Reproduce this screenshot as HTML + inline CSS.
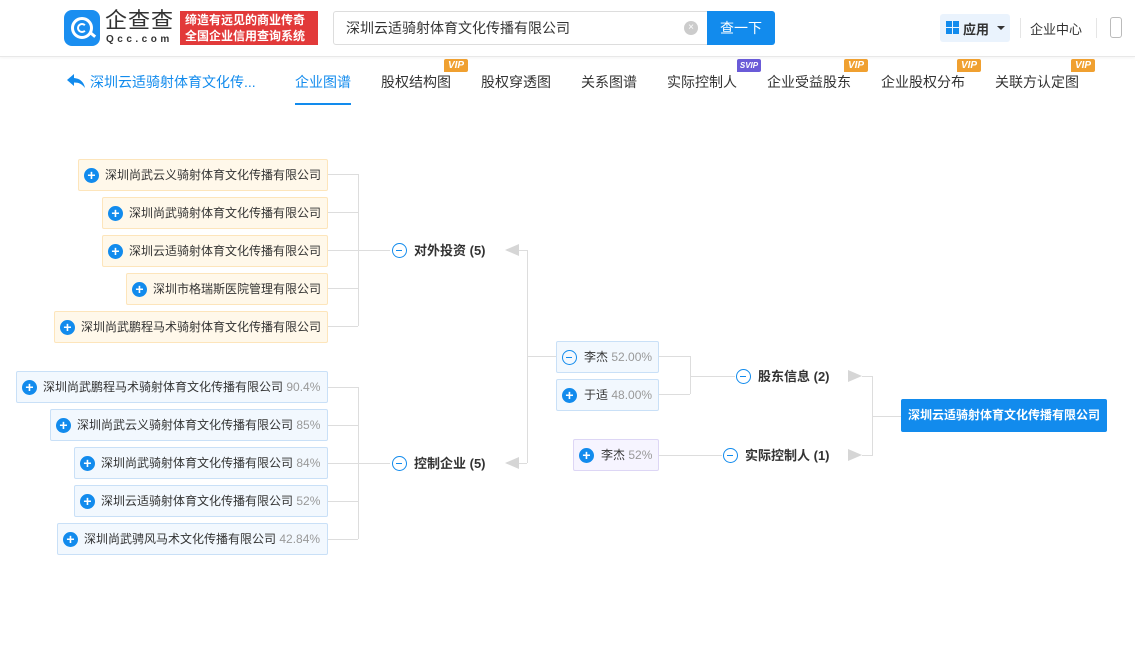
<!DOCTYPE html>
<html><head><meta charset="utf-8"><style>
*{margin:0;padding:0;box-sizing:border-box}
body{width:1135px;height:665px;background:#fff;position:relative;overflow:hidden;font-family:"Liberation Sans","Noto Sans CJK SC",sans-serif;color:#333}
.a{position:absolute}
.hdr{left:0;top:0;width:1135px;height:57px;border-bottom:1px solid #e8e8e8;box-shadow:0 1px 3px rgba(0,0,0,.05)}
.box{position:absolute;height:32px;border-radius:2px;font-size:12px;line-height:30px;padding-left:26px;white-space:nowrap;color:#333}
.o{background:#fff8ea;border:1px solid #fde5bb}
.b{background:#f2f8fe;border:1px solid #c9e0f7}
.p{background:#f6f4ff;border:1px solid #ddd6f5}
.pl{position:absolute;left:5px;top:8px;width:15px;height:15px;border-radius:50%;background:#128bed;color:#fff;font-size:14px;line-height:14px;text-align:center;font-weight:bold}
.mi{position:absolute;left:5px;top:8px;width:15px;height:15px;border-radius:50%;border:1.5px solid #128bed}
.mi:after,.lc:after{content:"";position:absolute;left:3px;top:5.5px;width:6px;height:1.5px;background:#128bed}
.g{color:#999}
.h{position:absolute;height:1px;background:#ddd}
.v{position:absolute;width:1px;background:#ddd}
.lab{position:absolute;font-size:13px;font-weight:bold;color:#333;line-height:16px;padding-left:22px;white-space:nowrap}
.lc{position:absolute;left:0;top:0;width:15px;height:15px;border-radius:50%;border:1.5px solid #128bed}
.tri{position:absolute;width:0;height:0;border-top:6px solid transparent;border-bottom:6px solid transparent}
.tl{border-right:14px solid #d6d6d6}
.tr{border-left:14px solid #d6d6d6}
.nav{position:absolute;top:72px;font-size:14px;color:#333;white-space:nowrap}
.vip{position:absolute;top:59px;width:24px;height:13px;background:#f0a030;color:#fff;font-size:10px;font-weight:bold;font-style:italic;line-height:13px;text-align:center;border-radius:2px 2px 2px 0}
</style></head><body>
<div class="a hdr"></div>
<!-- logo -->
<div class="a" style="left:64px;top:10px;width:36px;height:36px;border-radius:8px;background:#1a8ef0"></div>
<div class="a" style="left:71px;top:17px;width:22px;height:22px;border-radius:50%;border:3px solid #fff"></div>
<div class="a" style="left:77px;top:23px;width:10px;height:10px;border-radius:50%;border:2.5px solid #fff;border-right-color:transparent"></div>
<div class="a" style="left:89px;top:33px;width:7px;height:3px;background:#fff;transform:rotate(40deg)"></div>
<div class="a" style="left:105px;top:8px;font-size:22px;color:#333;line-height:26px;letter-spacing:1px">企查查</div>
<div class="a" style="left:106px;top:34px;font-size:10px;color:#333;letter-spacing:3.5px;font-weight:bold">Qcc.com</div>
<div class="a" style="left:180px;top:11px;width:138px;height:34px;background:#e23a3a;color:#fff;font-size:12px;line-height:16px;padding:1px 0 0 5px;font-weight:bold;white-space:nowrap">缔造有远见的商业传奇<br>全国企业信用查询系统</div>
<!-- search -->
<div class="a" style="left:333px;top:11px;width:376px;height:34px;border:1px solid #ddd;border-radius:3px 0 0 3px;font-size:14px;line-height:32px;padding-left:12px;color:#333">深圳云适骑射体育文化传播有限公司</div>
<div class="a" style="left:684px;top:21px;width:14px;height:14px;border-radius:50%;background:#ccc;color:#fff;font-size:10px;line-height:14px;text-align:center">×</div>
<div class="a" style="left:707px;top:11px;width:68px;height:34px;background:#128bed;border-radius:0 3px 3px 0;color:#fff;font-size:14px;line-height:34px;text-align:center">查一下</div>
<div class="a" style="left:940px;top:14px;width:70px;height:28px;background:#eaf3fd;border-radius:3px"></div>
<div class="a" style="left:946px;top:21px;width:6px;height:6px;background:#128bed"></div>
<div class="a" style="left:953px;top:21px;width:6px;height:6px;background:#128bed"></div>
<div class="a" style="left:946px;top:28px;width:6px;height:6px;background:#128bed"></div>
<div class="a" style="left:953px;top:28px;width:6px;height:6px;background:#128bed"></div>
<div class="a" style="left:963px;top:19px;font-size:13px;font-weight:bold;color:#333">应用</div>
<div class="tri a" style="left:997px;top:26px;border:4px solid transparent;border-top:4px solid #333;border-bottom:0"></div>
<div class="a" style="left:1020px;top:18px;width:1px;height:20px;background:#e5e5e5"></div>
<div class="a" style="left:1030px;top:19px;font-size:13px;color:#333">企业中心</div>
<div class="a" style="left:1096px;top:18px;width:1px;height:20px;background:#e5e5e5"></div>
<div class="a" style="left:1110px;top:17px;width:12px;height:21px;border:1.5px solid #bbb;border-radius:3px"></div>
<!-- nav -->
<svg class="a" style="left:66px;top:73px" width="20" height="16" viewBox="0 0 20 16"><path d="M8 1 L1 7 L8 13 L8 9.5 C13 9.5 16 11 19 15 C18 9 14 5.5 8 5 Z" fill="#128bed"/></svg>
<div class="nav" style="left:90px;color:#128bed">深圳云适骑射体育文化传...</div>
<div class="nav" style="left:295px;color:#128bed">企业图谱</div>
<div class="a" style="left:295px;top:103px;width:56px;height:2px;background:#128bed"></div>
<div class="nav" style="left:381px">股权结构图</div><div class="vip" style="left:444px">VIP</div>
<div class="nav" style="left:481px">股权穿透图</div>
<div class="nav" style="left:581px">关系图谱</div>
<div class="nav" style="left:667px">实际控制人</div><div class="vip" style="left:737px;background:#6a5bd8;font-size:8px">SVIP</div>
<div class="nav" style="left:767px">企业受益股东</div><div class="vip" style="left:844px">VIP</div>
<div class="nav" style="left:881px">企业股权分布</div><div class="vip" style="left:957px">VIP</div>
<div class="nav" style="left:995px">关联方认定图</div><div class="vip" style="left:1071px">VIP</div>

<!-- top group -->
<div class="box o" style="left:78px;top:159px;width:250px"><span class="pl">+</span>深圳尚武云义骑射体育文化传播有限公司</div>
<div class="box o" style="left:102px;top:197px;width:226px"><span class="pl">+</span>深圳尚武骑射体育文化传播有限公司</div>
<div class="box o" style="left:102px;top:235px;width:226px"><span class="pl">+</span>深圳云适骑射体育文化传播有限公司</div>
<div class="box o" style="left:126px;top:273px;width:202px"><span class="pl">+</span>深圳市格瑞斯医院管理有限公司</div>
<div class="box o" style="left:54px;top:311px;width:274px"><span class="pl">+</span>深圳尚武鹏程马术骑射体育文化传播有限公司</div>
<div class="h" style="left:328px;top:174px;width:30px"></div>
<div class="h" style="left:328px;top:212px;width:30px"></div>
<div class="h" style="left:328px;top:250px;width:62px"></div>
<div class="h" style="left:328px;top:288px;width:30px"></div>
<div class="h" style="left:328px;top:326px;width:30px"></div>
<div class="v" style="left:358px;top:174px;height:152px"></div>
<div class="lab" style="left:392px;top:243px"><span class="lc"></span>对外投资 (5)</div>
<div class="tri tl" style="left:505px;top:244px"></div>
<div class="h" style="left:519px;top:250px;width:8px"></div>

<!-- bottom group -->
<div class="box b" style="left:16px;top:371px;width:312px"><span class="pl">+</span>深圳尚武鹏程马术骑射体育文化传播有限公司 <span class="g">90.4%</span></div>
<div class="box b" style="left:50px;top:409px;width:278px"><span class="pl">+</span>深圳尚武云义骑射体育文化传播有限公司 <span class="g">85%</span></div>
<div class="box b" style="left:74px;top:447px;width:254px"><span class="pl">+</span>深圳尚武骑射体育文化传播有限公司 <span class="g">84%</span></div>
<div class="box b" style="left:74px;top:485px;width:254px"><span class="pl">+</span>深圳云适骑射体育文化传播有限公司 <span class="g">52%</span></div>
<div class="box b" style="left:57px;top:523px;width:271px"><span class="pl">+</span>深圳尚武骋风马术文化传播有限公司 <span class="g">42.84%</span></div>
<div class="h" style="left:328px;top:387px;width:30px"></div>
<div class="h" style="left:328px;top:425px;width:30px"></div>
<div class="h" style="left:328px;top:463px;width:62px"></div>
<div class="h" style="left:328px;top:501px;width:30px"></div>
<div class="h" style="left:328px;top:539px;width:30px"></div>
<div class="v" style="left:358px;top:387px;height:152px"></div>
<div class="lab" style="left:392px;top:456px"><span class="lc"></span>控制企业 (5)</div>
<div class="tri tl" style="left:505px;top:457px"></div>
<div class="h" style="left:519px;top:463px;width:8px"></div>
<div class="v" style="left:527px;top:250px;height:213px"></div>
<div class="h" style="left:527px;top:356px;width:29px"></div>

<!-- shareholders -->
<div class="box b" style="left:556px;top:341px;width:103px;padding-left:27px"><span class="mi"></span>李杰 <span class="g">52.00%</span></div>
<div class="box b" style="left:556px;top:379px;width:103px;padding-left:27px"><span class="pl">+</span>于适 <span class="g">48.00%</span></div>
<div class="h" style="left:659px;top:356px;width:31px"></div>
<div class="h" style="left:659px;top:394px;width:31px"></div>
<div class="v" style="left:690px;top:356px;height:38px"></div>
<div class="h" style="left:690px;top:376px;width:45px"></div>
<div class="lab" style="left:736px;top:369px"><span class="lc"></span>股东信息 (2)</div>
<div class="tri tr" style="left:848px;top:370px"></div>

<div class="box p" style="left:573px;top:439px;width:86px;padding-left:27px"><span class="pl">+</span>李杰 <span class="g">52%</span></div>
<div class="h" style="left:659px;top:455px;width:63px"></div>
<div class="lab" style="left:723px;top:448px"><span class="lc"></span>实际控制人 (1)</div>
<div class="tri tr" style="left:848px;top:449px"></div>

<div class="h" style="left:862px;top:376px;width:10px"></div>
<div class="h" style="left:862px;top:455px;width:10px"></div>
<div class="v" style="left:872px;top:376px;height:80px"></div>
<div class="h" style="left:872px;top:416px;width:29px"></div>
<div class="a" style="left:901px;top:399px;width:206px;height:33px;background:#128bed;border-radius:2px;color:#fff;font-size:12px;font-weight:bold;line-height:33px;text-align:center">深圳云适骑射体育文化传播有限公司</div>
</body></html>
